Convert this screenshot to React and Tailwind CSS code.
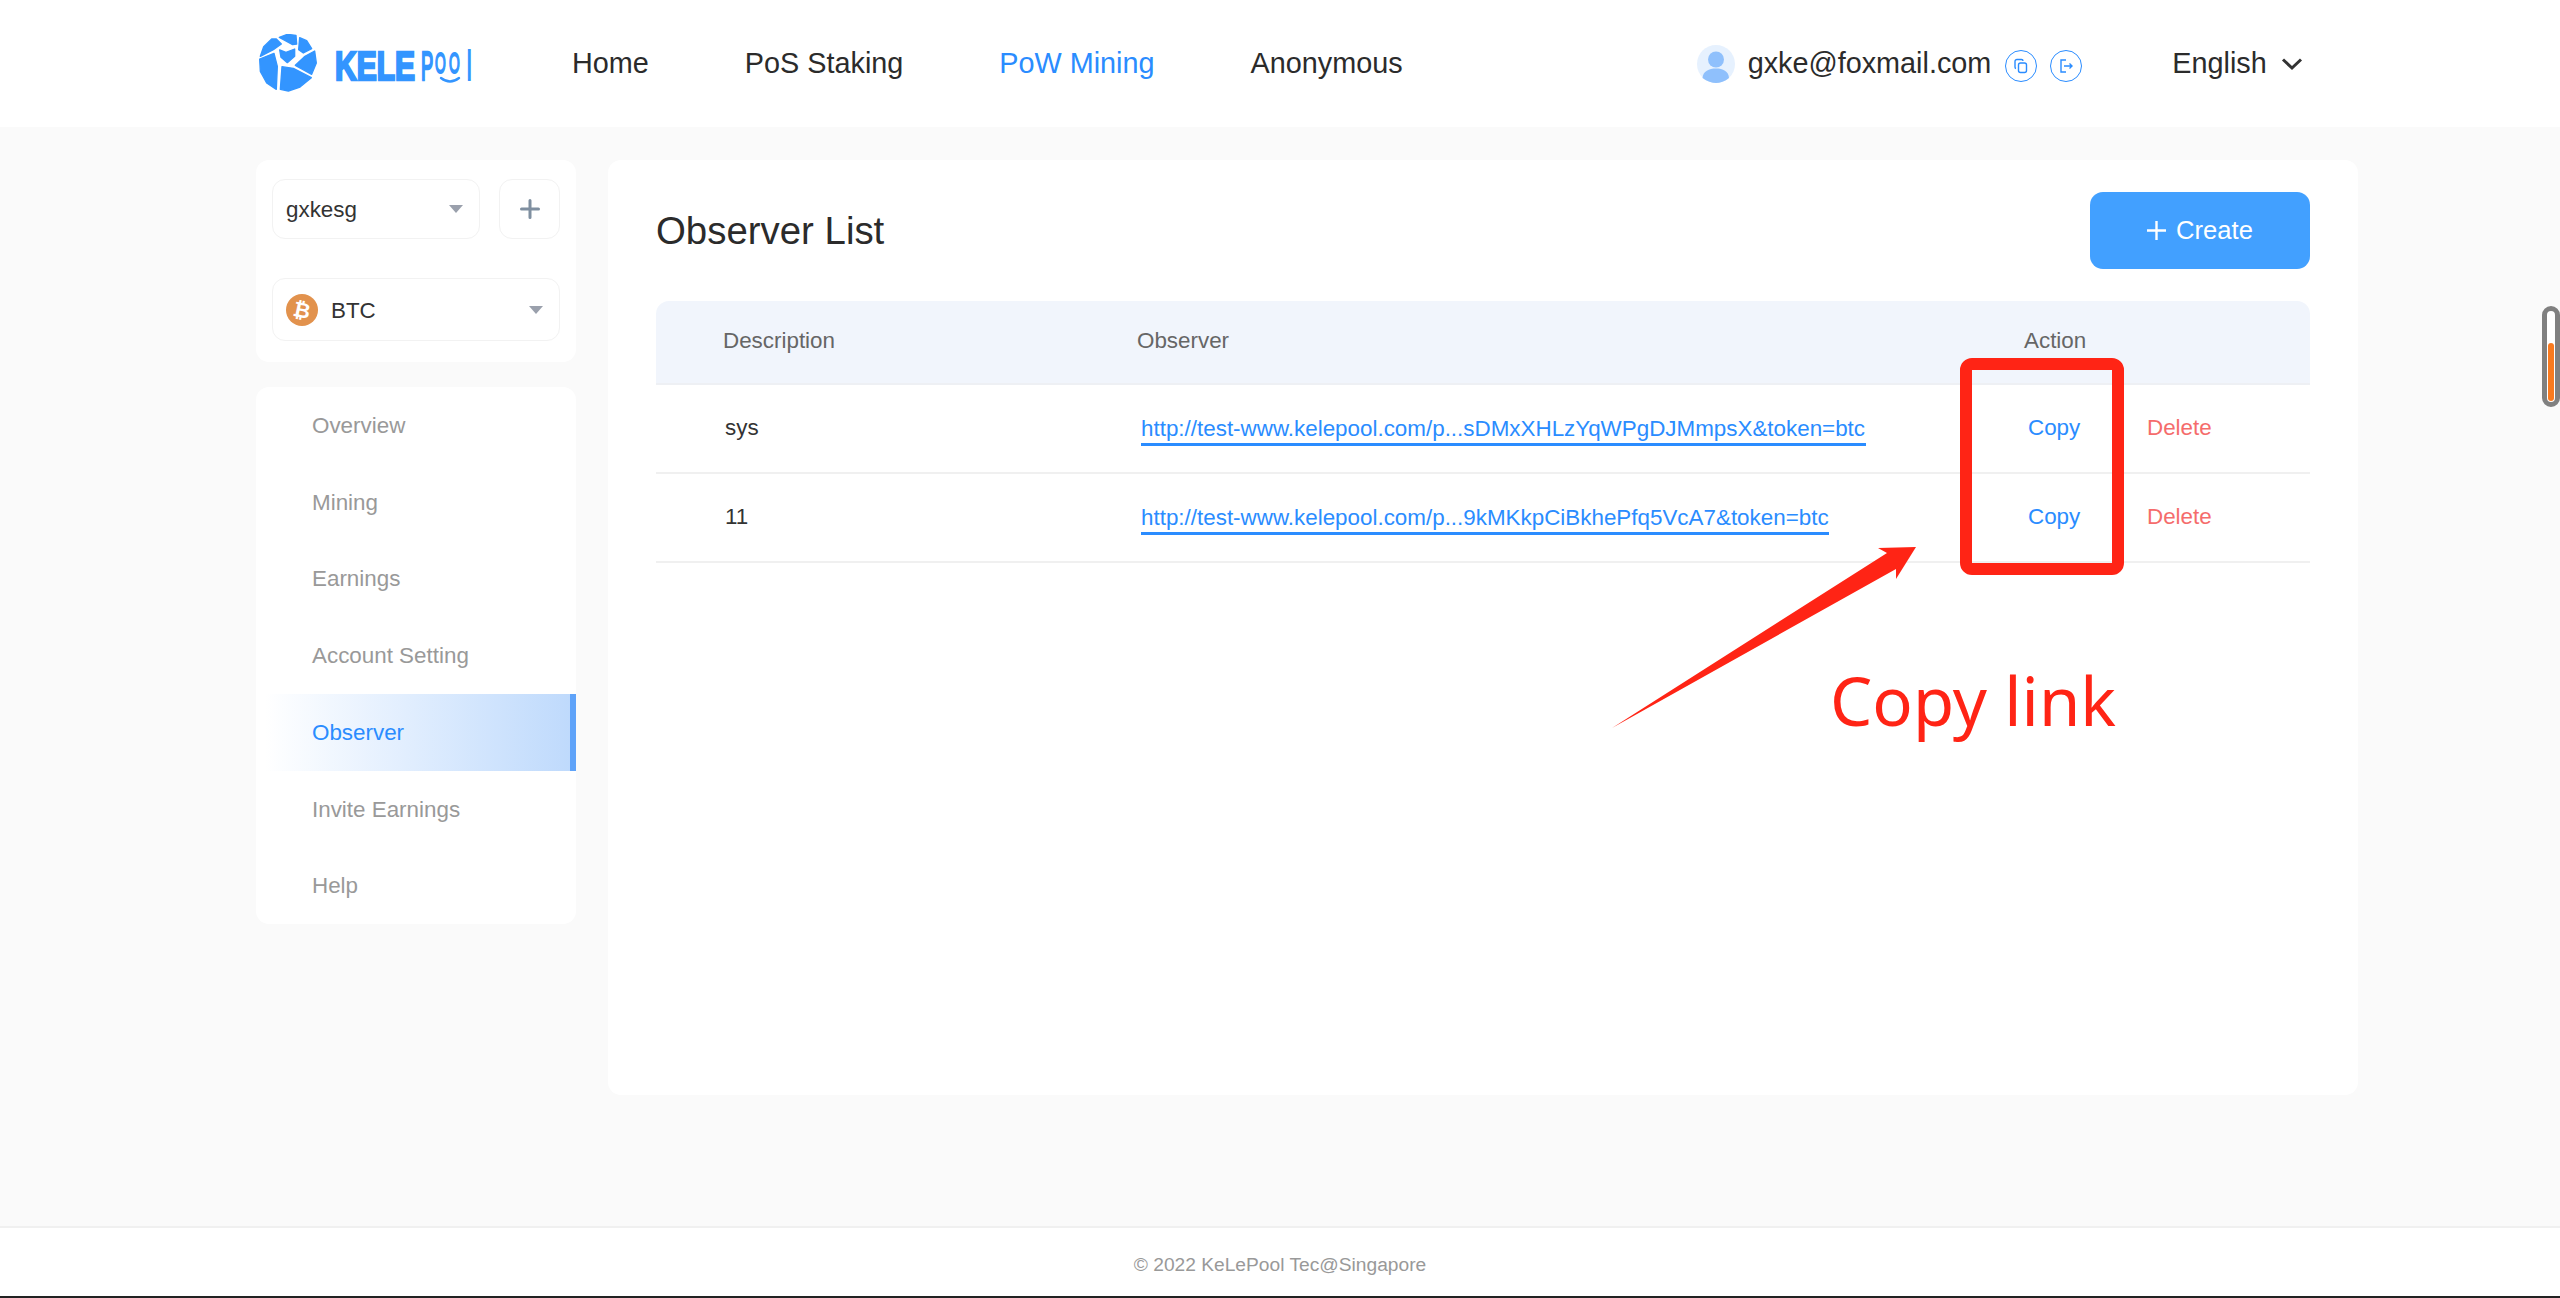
import React from "react";

const F = { fontFamily: '"Liberation Sans", Arial, sans-serif' };
const LOGO = "#3395ff";

function Logo() {
  const blobs = [
    "M88 28 L112 19 L138 22 L140 48 L128 50 Z",
    "M149 29 L170 38 L185 62 L160 75 L146 65 Z",
    "M31 85 L41 56 L65 33 L79 33 L94 48 L70 65 Z",
    "M29 93 L72 76 L82 115 L79 184 L50 165 L31 130 Z",
    "M89 66 L108 73 L134 63 L134 85 L112 104 L93 88 Z",
    "M194 69 L199 105 L185 139 L136 112 L165 85 Z",
    "M96 116 L130 121 L184 149 L150 177 L115 189 L91 184 Z",
  ];
  return (
    <div className="flex items-center w-[218px] h-[60px] pl-[2px]">
      <svg width="60" height="60" viewBox="24 18 180 180" className="shrink-0">
        {blobs.map((d) => (
          <path key={d} d={d} fill={LOGO} stroke={LOGO} strokeWidth="4" strokeLinejoin="round" />
        ))}
      </svg>
      <svg width="140" height="44" viewBox="0 0 140 44" className="ml-[16px] shrink-0 overflow-visible" fill={LOGO} fontFamily='"Liberation Sans", Arial, sans-serif'>
        <g transform="translate(1 38) scale(0.75 1)">
          <text fontWeight="700" fontSize="40" stroke={LOGO} strokeWidth="2.4">KELE</text>
        </g>
        <g transform="translate(87 37.5) scale(0.46 1)">
          <text fontSize="40" stroke={LOGO} strokeWidth="2.4">P</text>
        </g>
        <g transform="translate(101 31) scale(0.46 1)">
          <text fontSize="30" stroke={LOGO} strokeWidth="2">O</text>
        </g>
        <g transform="translate(115 31) scale(0.46 1)">
          <text fontSize="30" stroke={LOGO} strokeWidth="2">O</text>
        </g>
        <g transform="translate(133 37.5) scale(0.5 1)">
          <text fontSize="40" stroke={LOGO} strokeWidth="2">l</text>
        </g>
        <path d="M107 36 Q116 43 125 36" fill="none" stroke={LOGO} strokeWidth="2.4" strokeLinecap="round" />
      </svg>
    </div>
  );
}

function Caret() {
  return <span className="w-0 h-0 border-x-[7px] border-x-transparent border-t-[8px] border-t-[#9aa0ac]" />;
}

function Row({ desc, link, w }) {
  return (
    <div className="flex h-[89px] pb-[1px] items-center border-b-2 border-[#f0f0f0] text-[22.4px]">
      <span className="w-[485px] pl-[69px] text-[#333]">{desc}</span>
      <span className={`${w} mt-[4px] border-b-[3px] border-[#2a8cff] text-[#2a8cff] leading-[28px] whitespace-nowrap`}>{link}</span>
      <span className="ml-auto flex">
        <span className="w-[119px] text-[#2a8cff]">Copy</span>
        <span className="w-[163px] text-[#f56c6c]">Delete</span>
      </span>
    </div>
  );
}

export default function App() {
  const items = ["Overview", "Mining", "Earnings", "Account Setting", "Observer", "Invite Earnings", "Help"];
  return (
    <div className="relative h-[1298px] w-[2560px] overflow-hidden flex flex-col bg-[#fafafa]" style={F}>
      <header className="h-[127px] bg-white flex items-center pl-[256px] shrink-0">
        <Logo />
        <nav className="flex gap-[96px] ml-[98px] text-[28.8px] text-[#2b2b2b]">
          <span>Home</span>
          <span>PoS Staking</span>
          <span className="text-[#2a8cff]">PoW Mining</span>
          <span>Anonymous</span>
        </nav>
        <div className="ml-[294px] flex items-center">
          <svg width="38" height="38" viewBox="0 0 38 38">
            <circle cx="19" cy="19" r="19" fill="#e6f1fe" />
            <circle cx="19" cy="14.5" r="8" fill="#8fc0fc" />
            <path d="M5.5 33 C6 26 12 23.5 19 23.5 C26 23.5 31.5 26 32 33 C28 36.5 23 38 19 38 C15 38 10 36.5 5.5 33 Z" fill="#8fc0fc" />
          </svg>
          <span className="ml-[13px] mt-[1px] text-[28.8px] text-[#2b2b2b]">gxke@foxmail.com</span>
          <span className="ml-[14px] w-[32px] h-[32px] rounded-full border border-[#2a8cff] flex items-center justify-center mt-[4px]">
            <svg width="16" height="16" viewBox="0 0 16 16" fill="none" stroke="#2a8cff" strokeWidth="1.4">
              <rect x="5.5" y="5" width="8" height="9.5" rx="2" />
              <path d="M3 10.5 A1.5 1.5 0 0 1 2 9 V3.5 A2 2 0 0 1 4 1.5 H8.5 A1.5 1.5 0 0 1 10 3" />
            </svg>
          </span>
          <span className="ml-[13px] w-[32px] h-[32px] rounded-full border border-[#2a8cff] flex items-center justify-center mt-[4px]">
            <svg width="16" height="16" viewBox="0 0 16 16" fill="none" stroke="#2a8cff" strokeWidth="1.4">
              <path d="M8 2 H3 V14 H8" />
              <path d="M6 8 H14 M11.5 5.5 L14 8 L11.5 10.5" />
            </svg>
          </span>
          <span className="ml-[90px] mt-[1px] text-[28.8px] text-[#2b2b2b]">English</span>
          <svg width="22" height="14" viewBox="0 0 22 14" className="ml-[14px]" fill="none" stroke="#333" strokeWidth="3">
            <path d="M2 2.5 L11 11 L20 2.5" />
          </svg>
        </div>
      </header>

      <main className="flex-1 flex gap-[32px] pl-[256px] pt-[33px] items-start">
        <aside className="w-[320px] flex flex-col gap-[25px]">
          <div className="h-[202px] bg-white rounded-[13px] px-[16px] pt-[19px] text-[22.4px] text-[#333]">
            <div className="flex gap-[19px]">
              <div className="w-[208px] h-[60px] border border-[#f2f2f2] rounded-[13px] flex items-center justify-between pl-[13px] pr-[16px]">
                <span className="mt-[2px]">gxkesg</span>
                <Caret />
              </div>
              <div className="w-[61px] h-[60px] border border-[#f2f2f2] rounded-[13px] flex items-center justify-center">
                <svg width="20" height="20" viewBox="0 0 20 20" stroke="#7f8fa0" strokeWidth="3" strokeLinecap="round">
                  <path d="M10 1.5 V18.5 M1.5 10 H18.5" />
                </svg>
              </div>
            </div>
            <div className="mt-[39px] h-[63px] border border-[#f2f2f2] rounded-[13px] flex items-center pl-[13px] pr-[16px]">
              <svg width="32" height="32" viewBox="0 0 32 32">
                <circle cx="16" cy="16" r="16" fill="#e2924d" />
                <text x="16" y="23.5" textAnchor="middle" fontFamily='"DejaVu Sans", sans-serif' fontWeight="700" fontSize="21" fill="#fff" transform="rotate(12 16 16)">₿</text>
              </svg>
              <span className="ml-[13px] mt-[2px]">BTC</span>
              <span className="ml-auto flex"><Caret /></span>
            </div>
          </div>
          <div className="bg-white rounded-[13px] overflow-hidden text-[22.4px] text-[#999]">
            {items.map((t) =>
              t === "Observer" ? (
                <div key={t} className="h-[77px] flex items-center pl-[56px] pt-[1px] text-[#2a8cff] border-r-[6px] border-[#5fa3f9] bg-gradient-to-r from-white from-[3%] to-[#bfdafc]">{t}</div>
              ) : (
                <div key={t} className="h-[76.7px] flex items-center pl-[56px] pt-[1px]">{t}</div>
              )
            )}
          </div>
        </aside>

        <section className="w-[1750px] h-[935px] bg-white rounded-[13px] px-[48px] pt-[32px]">
          <div className="flex items-center justify-between h-[77px]">
            <h1 className="text-[38.4px] text-[#2b2b2b]">Observer List</h1>
            <button className="w-[220px] h-[77px] rounded-[13px] bg-[#42a0ff] text-white text-[25.6px] flex items-center justify-center gap-[10px]">
              <svg width="19" height="19" viewBox="0 0 19 19" stroke="#fff" strokeWidth="2.4">
                <path d="M9.5 0 V19 M0 9.5 H19" />
              </svg>
              <span>Create</span>
            </button>
          </div>
          <div className="mt-[32px]">
            <div className="flex h-[84px] pb-[3px] items-center bg-[#f1f5fc] rounded-t-[13px] border-b-2 border-[#eef0f4] text-[22.4px] text-[#666]">
              <span className="w-[481px] pl-[67px]">Description</span>
              <span className="w-[887px]">Observer</span>
              <span>Action</span>
            </div>
            <Row desc="sys" link="http://test-www.kelepool.com/p...sDMxXHLzYqWPgDJMmpsX&token=btc" w="w-[725px]" />
            <Row desc="11" link="http://test-www.kelepool.com/p...9kMKkpCiBkhePfq5VcA7&token=btc" w="w-[688px]" />
          </div>
        </section>
      </main>

      <footer className="h-[72px] bg-white border-t-2 border-[#f0f0f0] border-b-2 border-b-[#222] pt-[6px] flex items-center justify-center text-[19.2px] text-[#999] shrink-0">
        © 2022 KeLePool Tec@Singapore
      </footer>

      {/* annotations drawn over the page */}
      <div className="absolute left-[1960px] top-[358px] w-[164px] h-[217px] border-[12px] border-[#ff2415] rounded-[12px]" />
      <svg className="absolute left-0 top-0 pointer-events-none" width="2560" height="1298">
        <path d="M1612 728 L1887 553 L1878 548 L1916 547 L1896 579 L1896 569 Z" fill="#ff2415" />
      </svg>
      <span className="absolute left-[1830px] top-[650px] text-[67px] leading-[100px] text-[#ff2415] whitespace-nowrap" style={{ fontFamily: '"Noto Sans", sans-serif' }}>Copy link</span>

      <div className="absolute left-[2542px] top-[306px] w-[18px] h-[101px] rounded-full border-[5px] border-[#808080] bg-white">
        <div className="absolute left-[1px] right-[1px] top-[32px] bottom-[1px] rounded-full bg-[#f97a1f]" />
      </div>
    </div>
  );
}
